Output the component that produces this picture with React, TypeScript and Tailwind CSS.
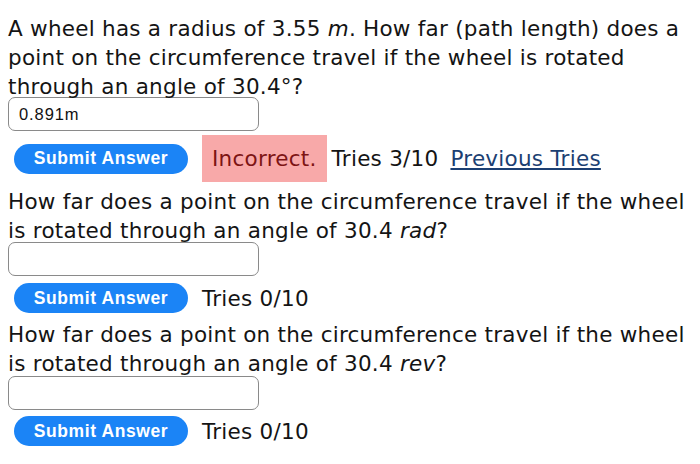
import React from "react";

function Input({ value }: { value?: string }) {
  return (
    <div className="w-[251px] h-[34px] border-[1.5px] border-[#8a8a8a] rounded-[7px] flex items-center pl-[10px] font-['Liberation_Sans',sans-serif] text-[16.5px] tracking-[0.9px] text-[#111]">
      {value}
    </div>
  );
}

function SubmitButton() {
  return (
    <div className="ml-[6px] w-[174px] h-[30px] shrink-0 rounded-full bg-[#1b84f6] flex items-center justify-center font-['Liberation_Sans',sans-serif] font-bold text-[17.5px] tracking-[0.6px] text-white">
      Submit Answer
    </div>
  );
}

export default function App() {
  return (
    <div className="w-[700px] h-[464px] bg-white pl-2 pt-[14px] font-['DejaVu_Sans',sans-serif] text-[21.5px] tracking-[0.25px] leading-[29px] text-[#141414]">
      <p>
        A wheel has a radius of 3.55 <i>m</i>. How far (path length) does a point on the circumference travel if the wheel is rotated through an angle of 30.4°?
      </p>
      <div className="mt-[-4px]">
        <Input value="0.891m" />
      </div>
      <div className="flex items-center gap-[14px] min-h-[36px] my-[4px]">
        <SubmitButton />
        <div className="flex items-center">
          <span className="h-[47px] flex items-center px-[10px] bg-[#f8a9a9] text-[#7d1414]">Incorrect.</span>
          <span className="ml-[5px]">Tries 3/10</span>
          <span className="ml-[12px] underline text-[#1c3f72]">Previous Tries</span>
        </div>
      </div>
      <p className="mt-[5px]">
        How far does a point on the circumference travel if the wheel is rotated through an angle of 30.4 <i>rad</i>?
      </p>
      <div className="mt-[-3px]">
        <Input />
      </div>
      <div className="flex items-center gap-[14px] min-h-[36px] my-[4px]">
        <SubmitButton />
        <span>Tries 0/10</span>
      </div>
      <p className="mt-[0px]">
        How far does a point on the circumference travel if the wheel is rotated through an angle of 30.4 <i>rev</i>?
      </p>
      <div className="mt-[-2px]">
        <Input />
      </div>
      <div className="flex items-center gap-[14px] min-h-[36px] my-[3px]">
        <SubmitButton />
        <span>Tries 0/10</span>
      </div>
    </div>
  );
}
